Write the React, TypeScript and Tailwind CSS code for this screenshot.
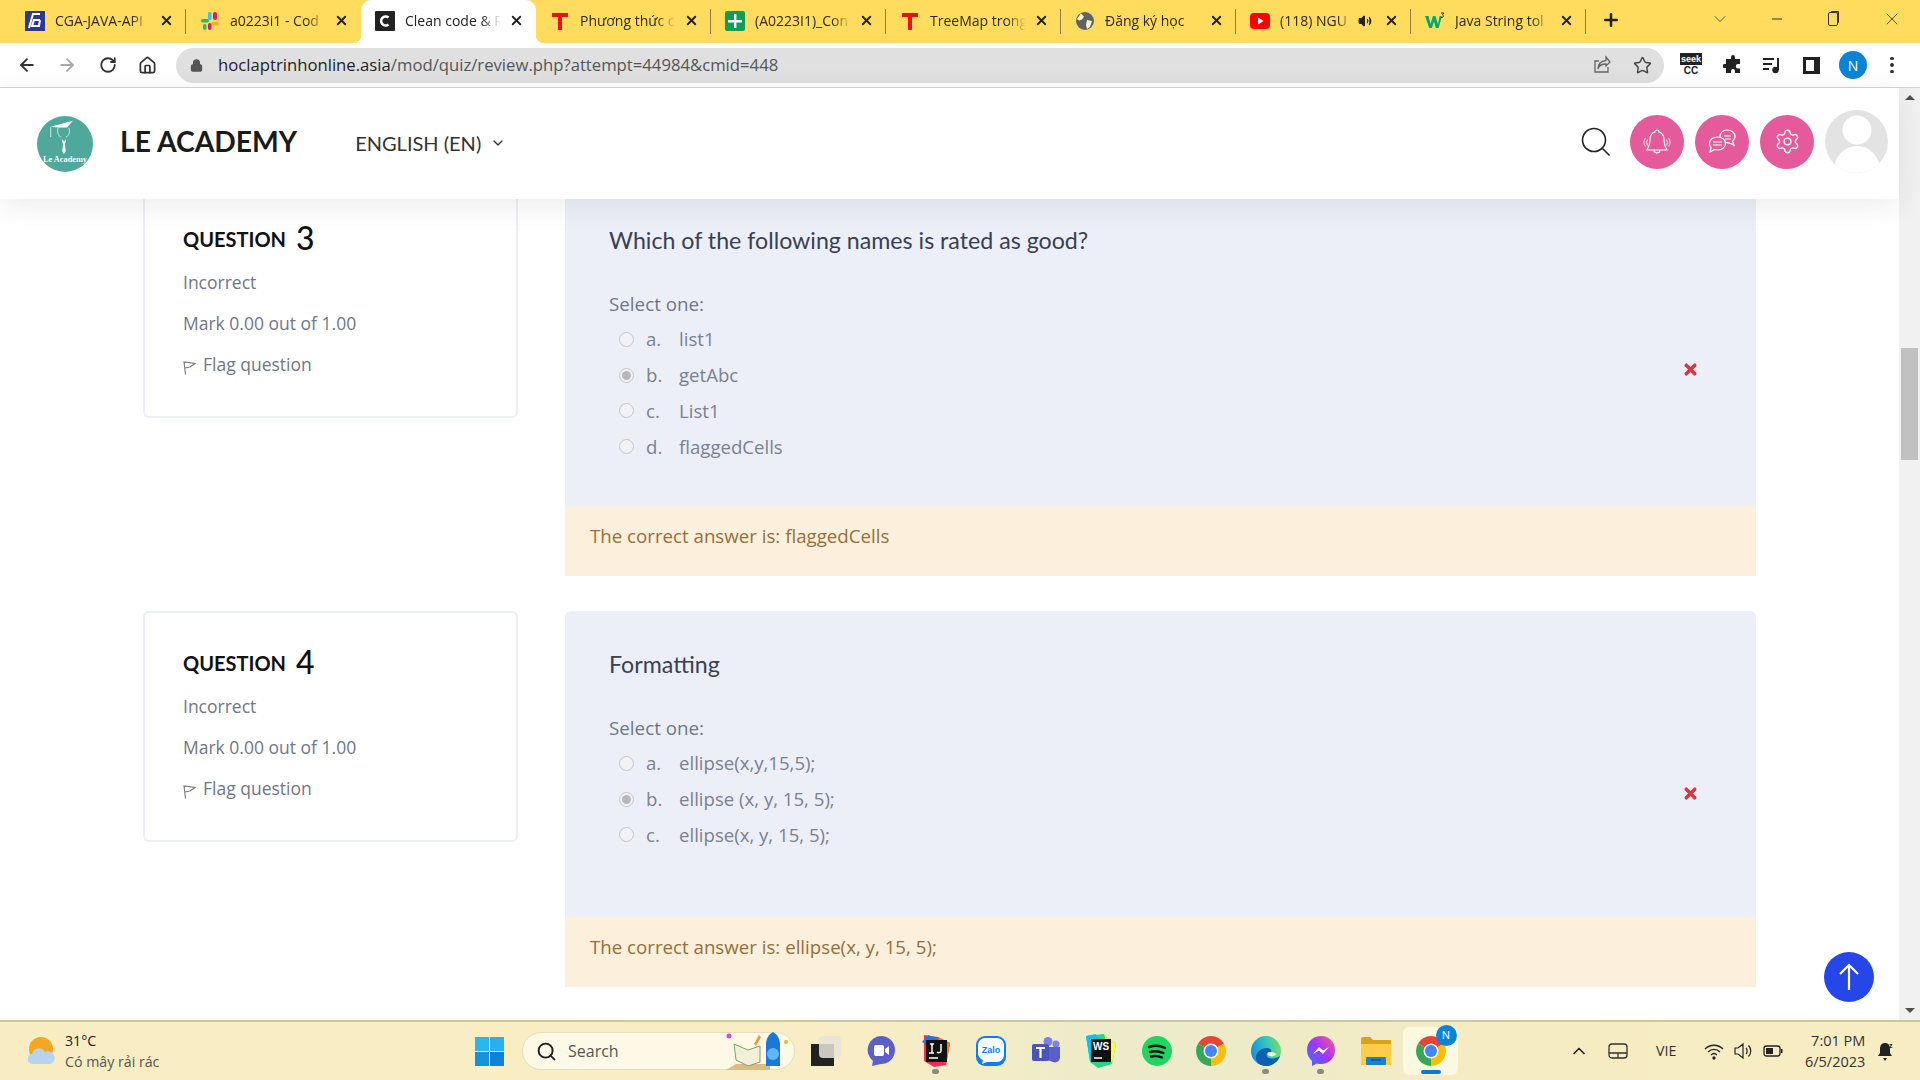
import type { ReactNode } from 'react';
import { ArrowLeft, ArrowRight, RotateCw, Home, Lock, Star, X, Plus, ChevronDown, ChevronUp, Minus, Search, Settings, Volume2 } from 'lucide-react';

const heading = "font-['Lato','Open_Sans',sans-serif]";

function Chrome({ size = 30 }: { size?: number }) {
  return (
    <svg width={size} height={size} viewBox="4 4 40 40">
      <path d="M24 24L6.700 14A20 20 0 0 1 41.300 14z" fill="#ea4335" />
      <path d="M24 24L41.300 14A20 20 0 0 1 24 44z" fill="#fbbc04" />
      <path d="M24 24L24 44A20 20 0 0 1 6.700 14z" fill="#34a853" />
      <circle cx="24" cy="24" r="10" fill="#fff" />
      <circle cx="24" cy="24" r="8" fill="#4285f4" />
    </svg>
  );
}

const favicons: Record<string, ReactNode> = {
  g: (
    <svg width="20" height="20" viewBox="0 0 20 20">
      <rect width="20" height="20" fill="#2b3a8f" />
      <path d="M15 3H8L4 17M15 9H9l-2 6h7l1-6" fill="none" stroke="#fff" strokeWidth="2" />
    </svg>
  ),
  slack: (
    <svg width="20" height="20" viewBox="0 0 20 20">
      <rect x="8" y="1" width="3.500" height="8" rx="1.700" fill="#36c5f0" />
      <rect x="1" y="8" width="8" height="3.500" rx="1.700" fill="#2eb67d" />
      <rect x="13" y="1" width="4" height="8" rx="2" fill="#e01e5a" />
      <rect x="11" y="11" width="8" height="3.500" rx="1.700" fill="#ecb22e" />
      <rect x="8" y="12" width="3.500" height="7" rx="1.700" fill="#e01e5a" />
      <rect x="3" y="13" width="3.500" height="6" rx="1.700" fill="#2eb67d" />
    </svg>
  ),
  c: (
    <svg width="20" height="20" viewBox="0 0 20 20">
      <rect width="20" height="20" rx="1" fill="#222" />
      <path d="M13.500 6.500A4.500 4.500 0 1 0 13.500 13.500" fill="none" stroke="#fff" strokeWidth="2.600" />
    </svg>
  ),
  t: (
    <svg width="20" height="20" viewBox="0 0 20 20">
      <path d="M2 2h16v4h-6v13H8V6H2z" fill="#f01010" />
    </svg>
  ),
  sheet: (
    <svg width="20" height="20" viewBox="0 0 20 20">
      <rect width="20" height="20" rx="2" fill="#0f9d58" />
      <path d="M3 9h14v2.400H3zM9 3h2.400v14H9z" fill="#fff" />
    </svg>
  ),
  globe: (
    <svg width="20" height="20" viewBox="0 0 20 20">
      <circle cx="10" cy="10" r="9" fill="#5f6368" />
      <path d="M6 2.500l3 3-2 3-3 1-2-1.500zM12 9l5 1-2 6-3 2-1-4z" fill="#fdf3c8" />
    </svg>
  ),
  yt: (
    <svg width="20" height="20" viewBox="0 0 20 20">
      <rect y="2" width="20" height="16" rx="4" fill="#f00" />
      <path d="M8 6.500l5.500 3.500L8 13.500z" fill="#fff" />
    </svg>
  ),
  w3: (
    <svg width="20" height="20" viewBox="0 0 20 20">
      <path d="M0 5h3.500l2 8 2.500-8h2.500l2.500 8 1.600-8H17l-3.400 12h-2.800L9 10.500 7 17H4.200z" fill="#04a96d" />
      <path d="M16 2h3l-1.500 1.800c1.500.5 1 3.200-1.500 2.700" fill="none" stroke="#333" strokeWidth="1" />
    </svg>
  ),
};

// titles are what the tab strip has room to show, the last letters fade out
const tabs = [
  { title: 'CGA-JAVA-API', icon: 'g' },
  { title: 'a0223i1 - Cod', icon: 'slack' },
  { title: 'Clean code & R', icon: 'c', active: true },
  { title: 'Phương thức c', icon: 't' },
  { title: '(A0223I1)_Con', icon: 'sheet' },
  { title: 'TreeMap trong', icon: 't' },
  { title: 'Đăng ký học', icon: 'globe' },
  { title: '(118) NGU', icon: 'yt', audio: true },
  { title: 'Java String tol', icon: 'w3' },
];

function Tab({ title, icon, active, audio, noSep }: { title: string; icon: string; active?: boolean; audio?: boolean; noSep?: boolean }) {
  return (
    <div className={`relative flex h-[43px] w-[175px] items-center pb-[2px] pl-[14px] pr-[12px] ${active ? 'rounded-t-[10px] bg-white' : ''}`}>
      {active && (
        <>
          <div className="absolute bottom-0 left-[-8px] h-2 w-2 bg-[radial-gradient(circle_at_0_0,transparent_8px,white_8.5px)]" />
          <div className="absolute bottom-0 right-[-8px] h-2 w-2 bg-[radial-gradient(circle_at_100%_0,transparent_8px,white_8.5px)]" />
        </>
      )}
      <div className="flex w-[20px] shrink-0 items-center justify-center">{favicons[icon]}</div>
      <div className={`ml-[10px] min-w-0 flex-1 overflow-hidden whitespace-nowrap text-[14px] [mask-image:linear-gradient(to_right,black_78%,transparent_98%)] ${active ? 'text-[#222]' : 'text-[#2f2a18]'}`}>{title}</div>
      {audio && <Volume2 size={14} className="ml-1 mr-[6px] shrink-0 text-[#222]" fill="#222" />}
      <X size={15} strokeWidth={3} className="ml-[6px] shrink-0 text-[#222]" />
      {!noSep && <div className="absolute right-0 top-[9px] h-[25px] w-px bg-[#8f7f45]" />}
    </div>
  );
}

function TabStrip() {
  return (
    <div className="flex h-[43px] shrink-0 items-center bg-[#ffdc5e] pl-[11px]">
      {tabs.map((t, i) => (
        <Tab key={i} {...t} noSep={t.active || i === 1} />
      ))}
      <Plus size={20} strokeWidth={3} className="ml-[15px] mb-[3px] text-[#222]" />
      <ChevronDown size={20} strokeWidth={1} className="mb-[5px] ml-[89px] text-[#444]" />
      <Minus size={16} strokeWidth={1.5} className="mb-[5px] ml-[39px] text-[#333]" />
      <div className="mb-[5px] ml-[43px] h-[14px] w-[10px] rounded-[2px] border border-[#333] shadow-[2px_-2px_0_-1px_#333]" />
      <X size={20} strokeWidth={1} className="mb-[5px] ml-[44px] text-[#333]" />
    </div>
  );
}

function Toolbar() {
  return (
    <div className="flex h-[45px] shrink-0 items-center border-b border-[#d4d4d4] bg-white">
      <div className="flex w-[176px] items-center pl-[17px]">
        <ArrowLeft size={20} strokeWidth={2.2} className="text-[#333]" />
        <ArrowRight size={20} strokeWidth={2.2} className="ml-[20px] text-[#aaa]" />
        <RotateCw size={18} strokeWidth={2.4} className="ml-[22px] text-[#333]" />
        <Home size={19} strokeWidth={2.2} className="ml-[21px] text-[#333]" />
      </div>
      <div className="flex h-[35px] w-[1488px] items-center rounded-full bg-[#e0e0e0] pl-[14px] pr-[12px]">
        <Lock size={13} strokeWidth={3} className="text-[#555]" fill="#555" />
        <div className="ml-[15px] flex-1 font-['Open_Sans',sans-serif] text-[16.700px] text-[#555]">
          <span className="text-[#1f1f1f]">hoclaptrinhonline.asia</span>/mod/quiz/review.php?attempt=44984&amp;cmid=448
        </div>
        <svg width="20" height="20" viewBox="0 0 20 20" fill="none" stroke="#666" strokeWidth="1.300">
          <path d="M14 2l4 5-4 4V9c-4 0-7 1-8 5 0-5 3-8 8-8.500zM16 12v5H3V6h4" />
        </svg>
        <Star size={19} strokeWidth={1.8} className="ml-[21px] text-[#444]" />
      </div>
      <div className="ml-[16px] mt-[2px] flex h-[26px] w-[22px] flex-col items-center font-['Liberation_Sans',sans-serif] text-[10px] font-bold leading-[12px]">
        <span className="w-full bg-[#222] text-center text-[9px] text-white">seek</span>
        <span className="text-[#222]">CC</span>
      </div>
      <svg className="ml-[21px]" width="20" height="20" viewBox="0 0 20 20" fill="#222">
        <path d="M8 2a2 2 0 0 1 4 0v2h5v5h-2a2.200 2.200 0 0 0 0 4.400h2V18h-5v-2a2 2 0 0 0-4 0v2H3v-5H1.500a2 2 0 0 1 0-4H3V4h5z" />
      </svg>
      <svg className="ml-[19px]" width="20" height="20" viewBox="0 0 20 20" fill="none" stroke="#222" strokeWidth="2">
        <path d="M1 4h11M1 9h9M1 14h6M16 3v12" />
        <circle cx="13.500" cy="15" r="2.200" fill="#222" />
      </svg>
      <div className="ml-[21px] h-[17px] w-[17px] border-[3px] border-[#222] border-r-[6px]" />
      <div className="ml-[19px] flex h-[28px] w-[28px] items-center justify-center rounded-full bg-[#0b84d8] font-['Open_Sans',sans-serif] text-[14px] text-white">N</div>
      <div className="ml-[23px] flex flex-col gap-[3px]">
        <div className="h-[3.5px] w-[3.5px] rounded-full bg-[#333]" />
        <div className="h-[3.5px] w-[3.5px] rounded-full bg-[#333]" />
        <div className="h-[3.5px] w-[3.5px] rounded-full bg-[#333]" />
      </div>
    </div>
  );
}

function Logo() {
  return (
    <svg className="mt-[4px]" width="56" height="56" viewBox="0 0 56 56">
      <circle cx="28" cy="28" r="28" fill="#4fa99a" />
      <path d="M13.700 10.700L36 4.700 30 11.500 21 11.500z" fill="#fff" />
      <path d="M13.700 11v10M21 12c-1 4 0 8 3 9M32 12c1 4 0 8-3 9" fill="none" stroke="#fff" strokeWidth="0.700" />
      <path d="M25 23l2 2.500 2-2.500v4l-1.300-1 1 9-1.700 3-1.700-3 1-9-1.300 1z" fill="#fff" />
      <text x="28" y="46" textAnchor="middle" fontSize="8.300" fontWeight="700" fill="#fff" fontFamily="'Liberation Serif', serif">Le Academy</text>
    </svg>
  );
}

function CircleButton({ children }: { children: ReactNode }) {
  return <div className="flex h-[54px] w-[54px] items-center justify-center rounded-full bg-[#e55a9a] text-white">{children}</div>;
}

function SiteHeader() {
  return (
    <header className="relative z-10 flex h-[111px] shrink-0 items-center bg-white pb-[4px] pl-[37px] shadow-[0_6px_28px_rgba(40,40,60,0.09)]">
      <Logo />
      <span className={`${heading} ml-[27px] text-[28.300px] font-bold leading-none text-[#1a1a1a]`}>LE ACADEMY</span>
      <span className={`${heading} ml-[58px] mt-[3px] text-[20px] leading-none text-[#333]`}>ENGLISH (EN)</span>
      <ChevronDown size={16} strokeWidth={2} className="ml-[9px] mt-[2px] text-[#333]" />
      <div className="ml-auto flex items-center pr-[11px]">
        <svg width="30" height="30" viewBox="0 0 30 30" fill="none" stroke="#222" strokeWidth="1.600">
          <circle cx="13" cy="13" r="11.500" />
          <path d="M21.500 21.500l7 7" />
        </svg>
        <div className="ml-[19px] flex items-center gap-[11px]">
          <CircleButton>
            <svg width="28" height="26" viewBox="0 0 28 26" fill="none" stroke="#fff" strokeWidth="1.200">
              <path d="M14 1a2 2 0 0 1 2 2c3.500 1 5 4 5 8 0 4 1 7 3 10H4c2-3 3-6 3-10 0-4 1.500-7 5-8a2 2 0 0 1 2-2zM11 21a3 3 0 0 0 6 0" />
              <path d="M2.500 9c-2 2.500-2 6 0 8.500M4.500 10.500c-1 2-1 4 0 6M25.500 9c2 2.500 2 6 0 8.500M23.500 10.500c1 2 1 4 0 6" strokeWidth="0.900" />
            </svg>
          </CircleButton>
          <CircleButton>
            <svg width="28" height="26" viewBox="0 0 28 26" fill="none" stroke="#fff" strokeWidth="1.200">
              <path d="M19 1c4.500 0 8 2.700 8 6.500 0 2-1 3.700-2.500 4.800l1.500 4-5-2.500c-4.500.5-9-2.500-9-6.300C12 3.700 15 1 19 1z" />
              <path d="M16 7h7M17 10h6" />
              <path d="M9.500 8c4.500 0 8 2.700 8 6.500S14 21 9.500 21c-1 0-2-.1-3-.5L2 23l1-4.500C2 17.500 1.500 16 1.500 14.500 1.500 10.700 5 8 9.500 8z" fill="#e55a9a" />
              <path d="M5 13h9M5 16h9" />
            </svg>
          </CircleButton>
          <CircleButton>
            <Settings size={27} strokeWidth={1.2} />
          </CircleButton>
        </div>
        <div className="ml-[11px] h-[63px] w-[63px] overflow-hidden rounded-full bg-[#e3e3e3]">
          <svg width="63" height="63" viewBox="0 0 63 63" fill="#fff">
            <circle cx="32" cy="20" r="14.500" />
            <ellipse cx="32" cy="60" rx="23" ry="24" />
          </svg>
        </div>
      </div>
    </header>
  );
}

function InfoCard({ n }: { n: number }) {
  return (
    <div className="h-[231px] w-[375px] shrink-0 rounded-md border-2 border-[#eceff5] bg-white pl-[38px] pt-[29px]">
      <div className="flex h-[42px] items-center">
        <span className={`${heading} text-[20px] font-bold leading-none text-[#111]`}>QUESTION</span>
        <span className={`${heading} mb-[2px] ml-[10px] text-[32px] font-medium leading-none text-[#111]`}>{n}</span>
      </div>
      <div className="mt-[1.5px] text-[17.500px] leading-[41px] text-[#6f7787]">
        <div>Incorrect</div>
        <div>Mark 0.00 out of 1.00</div>
        <div className="flex items-center">
          <svg className="mt-[6px]" width="13" height="15" viewBox="0 0 13 15" fill="none" stroke="#777" strokeWidth="1.100">
            <path d="M2.500 14.500L1 2l11 1.500-5 3.500-5 1" />
          </svg>
          <span className="ml-[7px]">Flag question</span>
        </div>
      </div>
    </div>
  );
}

function Radio({ checked }: { checked?: boolean }) {
  return (
    <span className="flex h-[15px] w-[15px] items-center justify-center rounded-full border border-[#c4c6cb] bg-[#f1f2f5]">
      {checked && <span className="h-[9px] w-[9px] rounded-full bg-[#b5b7bc]" />}
    </span>
  );
}

function Question({ n, title, options, chosen, answer, panelHeight }: { n: number; title: string; options: string[]; chosen: number; answer: string; panelHeight: string }) {
  return (
    <div className="flex">
      <InfoCard n={n} />
      <div className="ml-[47px] w-[1191px]">
        <div className={`rounded-t-md bg-[#eceff8] pl-[44px] pt-[36px] ${panelHeight}`}>
          <div className={`${heading} h-[34px] text-[23.200px] leading-[34px] text-[#394150]`}>{title}</div>
          <div className="mt-[34px] text-[18.800px] leading-[26px] text-[#6f7787]">Select one:</div>
          <div className="mt-[4.500px] text-[18.600px] text-[#7a8190]">
            {options.map((o, i) => (
              <div key={i} className="flex h-[35.800px] items-center pl-[10px]">
                <Radio checked={i === chosen} />
                <span className="ml-[12px] w-[33px]">{'abcd'[i]}.</span>
                <span>{o}</span>
                {i === chosen && <X size={17} strokeWidth={5} className="mb-[12px] ml-auto mr-[57px] text-[#e0333f]" />}
              </div>
            ))}
          </div>
        </div>
        <div className="flex h-[70px] items-start bg-[#fcefdc] pl-[25px] pt-[17px] text-[18.700px] leading-[26px] text-[#94703a]">The correct answer is: {answer}</div>
      </div>
    </div>
  );
}

function Scrollbar() {
  return (
    <div className="flex w-[21px] shrink-0 flex-col items-center bg-[#f1f1f1]">
      <div className="mt-[7px] h-0 w-0 border-x-[5px] border-b-[5px] border-x-transparent border-b-[#505050]" />
      <div className="mt-[248px] h-[112px] w-[17px] bg-[#c1c1c1]" />
      <div className="mb-[7px] mt-auto h-0 w-0 border-x-[5px] border-t-[5px] border-x-transparent border-t-[#505050]" />
    </div>
  );
}

function TaskIcon({ children, dot, wide }: { children: ReactNode; dot?: boolean; wide?: boolean }) {
  return (
    <div className={`relative flex h-[48px] w-[55px] items-center justify-center ${wide ? 'rounded-md bg-[#fdf8e2]' : ''}`}>
      {children}
      {dot && <div className="absolute bottom-[1px] h-[5px] w-[7px] rounded-full bg-[#8a8a80]" />}
    </div>
  );
}

function Taskbar() {
  return (
    <div className="flex h-[60px] shrink-0 items-center border-t-2 border-[#cfc7a0] bg-[linear-gradient(90deg,#f8edc2,#f8edc4_45%,#ecebcb_60%,#f6ecc2_80%,#f8edc2)]">
      <svg className="ml-[28px]" width="28" height="28" viewBox="0 0 28 28">
        <circle cx="13" cy="12" r="12" fill="#f5a623" />
        <path d="M5 27a5 5 0 0 1-1-10 7 7 0 0 1 13-2 6 6 0 0 1 6 12z" fill="#b9d2ee" />
      </svg>
      <div className="ml-[9px] w-[150px] font-['Open_Sans',sans-serif] text-[14.200px] leading-[21px] text-[#333]">
        <div className="text-[#222]">31°C</div>
        <div className="text-[#555]">Có mây rải rác</div>
      </div>
      <div className="ml-[260px] grid h-[29px] w-[29px] grid-cols-2 gap-[1px]">
        <div className="bg-[#2ab7f1]" />
        <div className="bg-[#2ab0ee]" />
        <div className="bg-[#1494dd]" />
        <div className="bg-[#0f82d6]" />
      </div>
      <div className="relative ml-[18px] flex h-[38px] w-[273px] items-center rounded-full border border-[#e6dfbc] bg-[#fdf9e6] pl-[13px]">
        <Search size={21} strokeWidth={2.2} className="text-[#222]" />
        <span className="ml-[11px] font-['Open_Sans',sans-serif] text-[16px] text-[#555]">Search</span>
        <svg className="absolute right-[4px] top-[-3px]" width="66" height="42" viewBox="0 0 66 42">
          <path d="M2 40l10-6h34v6z" fill="#d8bd84" />
          <path d="M10 14l14 6 12-4v16l-12 4-12-6z" fill="#f3f0d8" stroke="#7da36a" />
          <path d="M30 14l5-9 2 2-5 9z" fill="#e99a3c" />
          <circle cx="5" cy="6" r="2.500" fill="#d24fd0" />
          <path d="M42 36V14c0-5 3-10 7-12 4 2 7 7 7 12v22z" fill="#1c78d8" />
          <circle cx="49" cy="24" r="6" fill="#5fb8f5" />
          <circle cx="62" cy="12" r="2" fill="#f0b232" />
        </svg>
      </div>
      <div className="ml-[3px] flex items-center">
        <TaskIcon>
          <div className="relative h-[30px] w-[30px]">
            <div className="absolute bottom-0 left-0 h-[22px] w-[23px] bg-[#222]" />
            <div className="absolute right-0 top-0 h-[22px] w-[22px] rounded-sm bg-[#e6e4da]/85" />
          </div>
        </TaskIcon>
        <TaskIcon>
          <svg width="30" height="32" viewBox="0 0 30 32">
            <path d="M15 1a14 14 0 0 1 14 14c0 8-6 14-14 14l-9 2 1-5A14 14 0 0 1 15 1z" fill="#5b5fc7" />
            <rect x="8" y="10" width="10" height="11" rx="2" fill="#fff" />
            <path d="M19 14l4-3v9l-4-3z" fill="#fff" />
          </svg>
        </TaskIcon>
        <TaskIcon dot>
          <svg width="32" height="34" viewBox="0 0 32 34">
            <path d="M4 1l14 2 12 6-4 22-12 2-10-6z" fill="#fe2857" />
            <path d="M2 8l6-7 22 8-3 12z" fill="#087cfa" />
            <path d="M18 3l12 6-4 22z" fill="#fe7a16" />
            <rect x="6" y="6" width="21" height="22" fill="#111" />
            <path d="M10 10h4M12 10v9M9 19h5M21 10v7c0 2-3 2-4 1M9 24h9" stroke="#fff" strokeWidth="1.500" fill="none" />
          </svg>
        </TaskIcon>
        <TaskIcon>
          <svg width="30" height="30" viewBox="0 0 30 30">
            <path d="M9 0h12a9 9 0 0 1 9 9v12a9 9 0 0 1-9 9H9a9 9 0 0 1-9-9V9a9 9 0 0 1 9-9z" fill="#0a7cff" />
            <path d="M10 2h11a7 7 0 0 1 7 7v10a7 7 0 0 1-7 7H11l-5 2 1-4a8 8 0 0 1-5-6V9a7 7 0 0 1 8-7z" fill="#fff" />
            <text x="15" y="17" textAnchor="middle" fontSize="9" fontWeight="700" fill="#0a7cff" fontFamily="'Liberation Sans', sans-serif">Zalo</text>
          </svg>
        </TaskIcon>
        <TaskIcon>
          <svg width="30" height="30" viewBox="0 0 30 30">
            <circle cx="25" cy="8" r="3.500" fill="#7b83eb" />
            <circle cx="17" cy="5.500" r="4.500" fill="#7b83eb" />
            <path d="M16 11h13v10a5 5 0 0 1-7 5l-6-2z" fill="#5b5fc7" />
            <rect x="1" y="8" width="17" height="17" rx="2" fill="#4b53bc" />
            <path d="M5 12h9M9.500 12v10" stroke="#fff" strokeWidth="2.200" />
          </svg>
        </TaskIcon>
        <TaskIcon>
          <svg width="30" height="34" viewBox="0 0 30 34">
            <path d="M0 2l18-2 12 10-4 20-14 4-8-6z" fill="#21d789" />
            <path d="M18 0l12 10-4 20z" fill="#fcf84a" />
            <path d="M0 2l10-2 6 12-12 14z" fill="#07c3f2" />
            <rect x="5" y="5" width="20" height="23" fill="#111" />
            <text x="15" y="16" textAnchor="middle" fontSize="10" fontWeight="700" fill="#fff" fontFamily="'Liberation Sans', sans-serif">WS</text>
            <path d="M8 24h8" stroke="#fff" strokeWidth="1.500" />
          </svg>
        </TaskIcon>
        <TaskIcon>
          <svg width="30" height="30" viewBox="0 0 30 30" className="ml-[2px]">
            <circle cx="15" cy="15" r="15" fill="#1ed760" />
            <path d="M7 11c6-2 11-1.500 16 1M8 16c5-1.500 9-1 13.500 1M9 20.500c4-1 7.500-.7 11 1" fill="none" stroke="#111" strokeWidth="2.400" strokeLinecap="round" />
          </svg>
        </TaskIcon>
        <TaskIcon>
          <Chrome />
        </TaskIcon>
        <TaskIcon dot>
          <svg width="30" height="30" viewBox="0 0 30 30">
            <defs>
              <linearGradient id="edge" x1="0" y1="0.600" x2="1" y2="0.400">
                <stop offset="0" stopColor="#1a8fd8" />
                <stop offset="0.550" stopColor="#30c5c0" />
                <stop offset="1" stopColor="#7bdc6a" />
              </linearGradient>
            </defs>
            <circle cx="15" cy="15" r="15" fill="url(#edge)" />
            <path d="M29 20c-2 6-8 10-14 10C8 30 4 25 5 20c1-5 6-8 11-8 3 0 5 2 4 4-5 0-6 4-2 6 4 1 8 0 11-2z" fill="#0f5fb0" />
            <path d="M17 16.500c3-1 7-.5 8.500 2-2 2-5 2.500-7 1.500-2-1-2.500-2.500-1.500-3.500z" fill="#f5eec8" />
          </svg>
        </TaskIcon>
        <TaskIcon dot>
          <svg width="30" height="32" viewBox="0 0 30 32">
            <defs>
              <linearGradient id="msg" x1="0" y1="1" x2="1" y2="0">
                <stop offset="0" stopColor="#2f7bf6" />
                <stop offset="0.500" stopColor="#a033ff" />
                <stop offset="1" stopColor="#ff5c87" />
              </linearGradient>
            </defs>
            <path d="M15 1c8 0 14 6 14 14s-6 14-14 14c-2 0-3 0-4-.5L6 31v-5c-3-3-5-6-5-11C1 7 7 1 15 1z" fill="url(#msg)" />
            <path d="M7 19l6-7 4 3.500 6-3.500-6 7-4-3.500z" fill="#fff" />
          </svg>
        </TaskIcon>
        <TaskIcon>
          <svg width="32" height="28" viewBox="0 0 32 28">
            <path d="M1 2a2 2 0 0 1 2-2h7l3 3h-12z" fill="#d9a21b" />
            <rect x="1" y="3" width="30" height="25" rx="1" fill="#d9a21b" />
            <path d="M1 7h30v19a2 2 0 0 1-2 2H3a2 2 0 0 1-2-2z" fill="#fccc4a" />
            <rect x="6" y="20" width="20" height="8" rx="1" fill="#1d7fd0" />
            <path d="M11 23h10" stroke="#0d4f90" strokeWidth="1.200" />
          </svg>
        </TaskIcon>
        <TaskIcon wide>
          <div className="relative">
            <Chrome />
            <div className="absolute right-[-11px] top-[-11px] flex h-[21px] w-[21px] items-center justify-center rounded-full bg-[#0b84d8] font-['Open_Sans',sans-serif] text-[11px] text-white">N</div>
          </div>
          <div className="absolute bottom-[1px] h-[4px] w-[20px] rounded-full bg-[#0b78d8]" />
        </TaskIcon>
      </div>
      <ChevronUp size={20} strokeWidth={2} className="ml-[111px] text-[#222]" />
      <svg className="ml-[19px]" width="20" height="20" viewBox="0 0 20 20" fill="none" stroke="#333" strokeWidth="1.300">
        <rect x="1" y="3" width="18" height="14" rx="3" />
        <path d="M1 12h18M10 12v5" />
      </svg>
      <span className="ml-[28px] font-['Open_Sans',sans-serif] text-[14.200px] text-[#333]">VIE</span>
      <svg className="ml-[28px]" width="20" height="20" viewBox="0 0 20 20" fill="none" stroke="#222" strokeWidth="1.300">
        <path d="M1 8c5-5 13-5 18 0M4 11c3.500-3.500 8.500-3.500 12 0M7 14c2-2 4-2 6 0" />
        <circle cx="10" cy="17" r="1" fill="#222" />
      </svg>
      <svg className="ml-[9px]" width="20" height="20" viewBox="0 0 20 20" fill="none" stroke="#222" strokeWidth="1.200">
        <path d="M2 7h3l5-4v14l-5-4H2zM13 7c1.500 1.500 1.500 4.500 0 6M15.500 4.500c3 3 3 8 0 11" />
      </svg>
      <svg className="ml-[10px]" width="20" height="20" viewBox="0 0 20 20">
        <rect x="1" y="5" width="16" height="10" rx="2.500" fill="none" stroke="#222" strokeWidth="1.300" />
        <rect x="3" y="7" width="7" height="6" fill="#222" />
        <rect x="18" y="8" width="1.500" height="4" fill="#222" />
      </svg>
      <div className="ml-[13px] w-[69px] text-right font-['Open_Sans',sans-serif] text-[14.500px] leading-[21px] text-[#333]">
        <div>7:01 PM</div>
        <div>6/5/2023</div>
      </div>
      <svg className="ml-[12px]" width="18" height="22" viewBox="0 0 18 22">
        <path d="M8 3c3 0 5 2 5 6v4l2 3H1l2-3V9c0-4 2-6 5-6zM6 18h4l-2 3z" fill="#222" />
        <text x="12" y="8" fontSize="7" fontWeight="700" fill="#222" fontFamily="'Liberation Sans', sans-serif">z</text>
      </svg>
    </div>
  );
}

export default function App() {
  return (
    <div className="flex h-[1080px] w-[1920px] flex-col overflow-hidden bg-white font-['Open_Sans',sans-serif]">
      <TabStrip />
      <Toolbar />
      <div className="flex min-h-0 flex-1">
        <div className="relative flex min-w-0 flex-1 flex-col">
          <SiteHeader />
          <div className="-mt-[12px] flex flex-col gap-[35px] pl-[143px]">
            <Question n={3} title="Which of the following names is rated as good?" options={['list1', 'getAbc', 'List1', 'flaggedCells']} chosen={1} answer="flaggedCells" panelHeight="h-[319px]" />
            <Question n={4} title="Formatting" options={['ellipse(x,y,15,5);', 'ellipse (x, y, 15, 5);', 'ellipse(x, y, 15, 5);']} chosen={1} answer="ellipse(x, y, 15, 5);" panelHeight="h-[306px]" />
          </div>
          <div className="absolute bottom-[18px] right-[25px] flex h-[50px] w-[50px] items-center justify-center rounded-full bg-[#2546e8] text-white">
            <svg width="24" height="28" viewBox="0 0 24 28" fill="none" stroke="#fff" strokeWidth="2.200">
              <path d="M12 27V3M3 11l9-9 9 9" />
            </svg>
          </div>
        </div>
        <Scrollbar />
      </div>
      <Taskbar />
    </div>
  );
}
